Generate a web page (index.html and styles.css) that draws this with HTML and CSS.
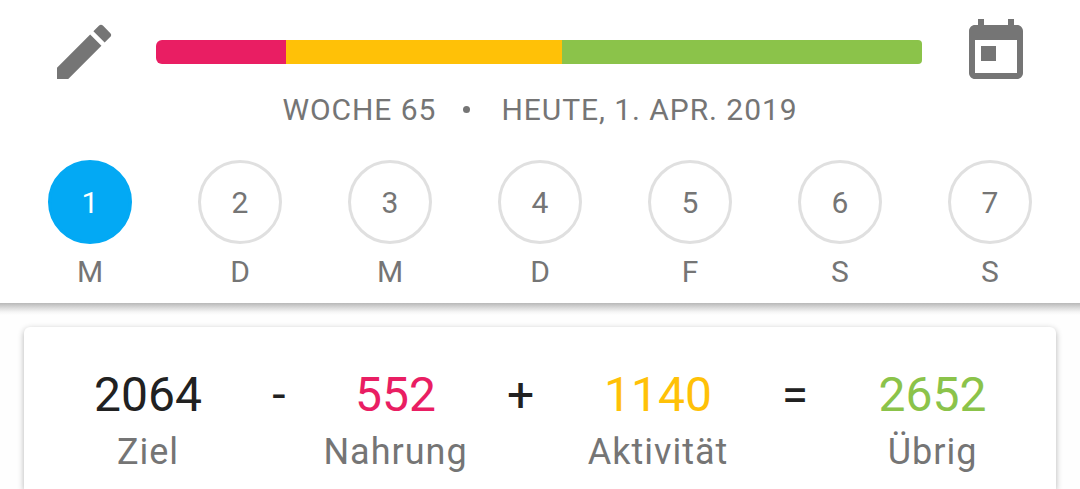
FILE: index.html
```html
<!DOCTYPE html>
<html lang="de">
<head>
    <meta charset="UTF-8">
    <title>Tagesübersicht</title>
    <link rel="stylesheet" href="styles.css">
</head>
<body>
    <header>
        <div class="toolbar">
            <svg class="icon" viewBox="0 0 24 24"><path d="M3 17.25V21h3.75L17.81 9.94l-3.75-3.75L3 17.25zM20.71 7.04a.996.996 0 0 0 0-1.41l-2.34-2.34a.996.996 0 0 0-1.41 0l-1.83 1.83 3.75 3.75 1.83-1.83z"/></svg>
            <div class="progress">
                <div class="food"></div>
                <div class="activity"></div>
                <div class="rest"></div>
            </div>
            <svg class="icon" viewBox="0 0 24 24"><path d="M19 3h-1V1h-2v2H8V1H6v2H5c-1.11 0-1.99.9-1.99 2L3 19c0 1.1.89 2 2 2h14c1.1 0 2-.9 2-2V5c0-1.1-.9-2-2-2zm0 16H5V8h14v11zM7 10h5v5H7z"/></svg>
        </div>
        <div class="date">
            <span>WOCHE 65</span>
            <span class="dot"></span>
            <span>HEUTE, 1. APR. 2019</span>
        </div>
        <div class="week">
            <div class="day active"><span class="number">1</span><span>M</span></div>
            <div class="day"><span class="number">2</span><span>D</span></div>
            <div class="day"><span class="number">3</span><span>M</span></div>
            <div class="day"><span class="number">4</span><span>D</span></div>
            <div class="day"><span class="number">5</span><span>F</span></div>
            <div class="day"><span class="number">6</span><span>S</span></div>
            <div class="day"><span class="number">7</span><span>S</span></div>
        </div>
    </header>

    <main>
        <div class="card">
            <div class="item goal"><strong>2064</strong><span>Ziel</span></div>
            <div class="operator">-</div>
            <div class="item eaten"><strong>552</strong><span>Nahrung</span></div>
            <div class="operator">+</div>
            <div class="item moved"><strong>1140</strong><span>Aktivität</span></div>
            <div class="operator">=</div>
            <div class="item left"><strong>2652</strong><span>Übrig</span></div>
        </div>
    </main>
</body>
</html>
```

FILE: styles.css
```css
* {
    box-sizing: border-box;
}

body {
    font-family: Roboto, "Liberation Sans", sans-serif;
    margin: 0;
    background-color: #fefefe;
    color: #757575;
}

header {
    height: 303px;
    background-color: #ffffff;
}

.toolbar {
    display: flex;
    align-items: center;
    height: 88px;
    padding: 16px 48px 0;
}

.icon {
    width: 72px;
    height: 72px;
    fill: #757575;
}

.progress {
    display: flex;
    width: 766px;
    height: 24px;
    margin: 0 38px 0 36px;
    border-radius: 6px 4px 4px 6px;
    overflow: hidden;
}

.food {
    width: 130px;
    background-color: #e91e63;
}

.activity {
    width: 276px;
    background-color: #ffc107;
}

.rest {
    flex: 1;
    background-color: #8bc34a;
}

.date {
    display: flex;
    align-items: center;
    justify-content: center;
    height: 42px;
    font-size: 30px;
    letter-spacing: 0.95px;
    white-space: nowrap;
}

.dot {
    width: 7px;
    height: 7px;
    margin: 0 31px 0 27px;
    border-radius: 50%;
    background-color: #757575;
}

.week {
    display: flex;
    justify-content: space-between;
    padding: 30px 48px 0;
}

.day {
    display: flex;
    flex-direction: column;
    align-items: center;
    width: 84px;
    font-size: 30px;
    line-height: 56px;
}

.number {
    width: 84px;
    height: 84px;
    border: 3px solid #e0e0e0;
    border-radius: 50%;
    line-height: 80px;
    text-align: center;
}

.active .number {
    border-color: #03a9f4;
    background-color: #03a9f4;
    color: white;
}

/* header shadow fades out over the top of the content */
main {
    height: 186px;
    padding: 24px 24px 0;
    overflow: hidden;
    background: linear-gradient(#b8b8b8, #dcdcdc 5px, #f5f5f5 9px, #fefefe 12px) no-repeat top / 100% 12px;
}

.card {
    display: grid;
    grid-template-columns: 248px 14px 219px 31px 244px 30px 245px;
    height: 162px;
    padding-top: 39px;
    border-radius: 6px 6px 0 0;
    background-color: #ffffff;
    box-shadow: 0 2px 6px rgba(0,0,0,0.3);
}

.item {
    display: flex;
    flex-direction: column;
    align-items: center;
    font-size: 36px;
    line-height: 57px;
    letter-spacing: 1px;
}

.item strong {
    font-size: 48px;
    font-weight: normal;
    line-height: 58px;
    letter-spacing: 0;
}

.operator {
    display: flex;
    justify-content: center;
    font-size: 48px;
    line-height: 58px;
    color: #212121;
}

.goal strong {
    color: #212121;
}

.eaten strong {
    color: #e91e63;
}

.moved strong {
    color: #ffc107;
}

.left strong {
    color: #8bc34a;
}
```
